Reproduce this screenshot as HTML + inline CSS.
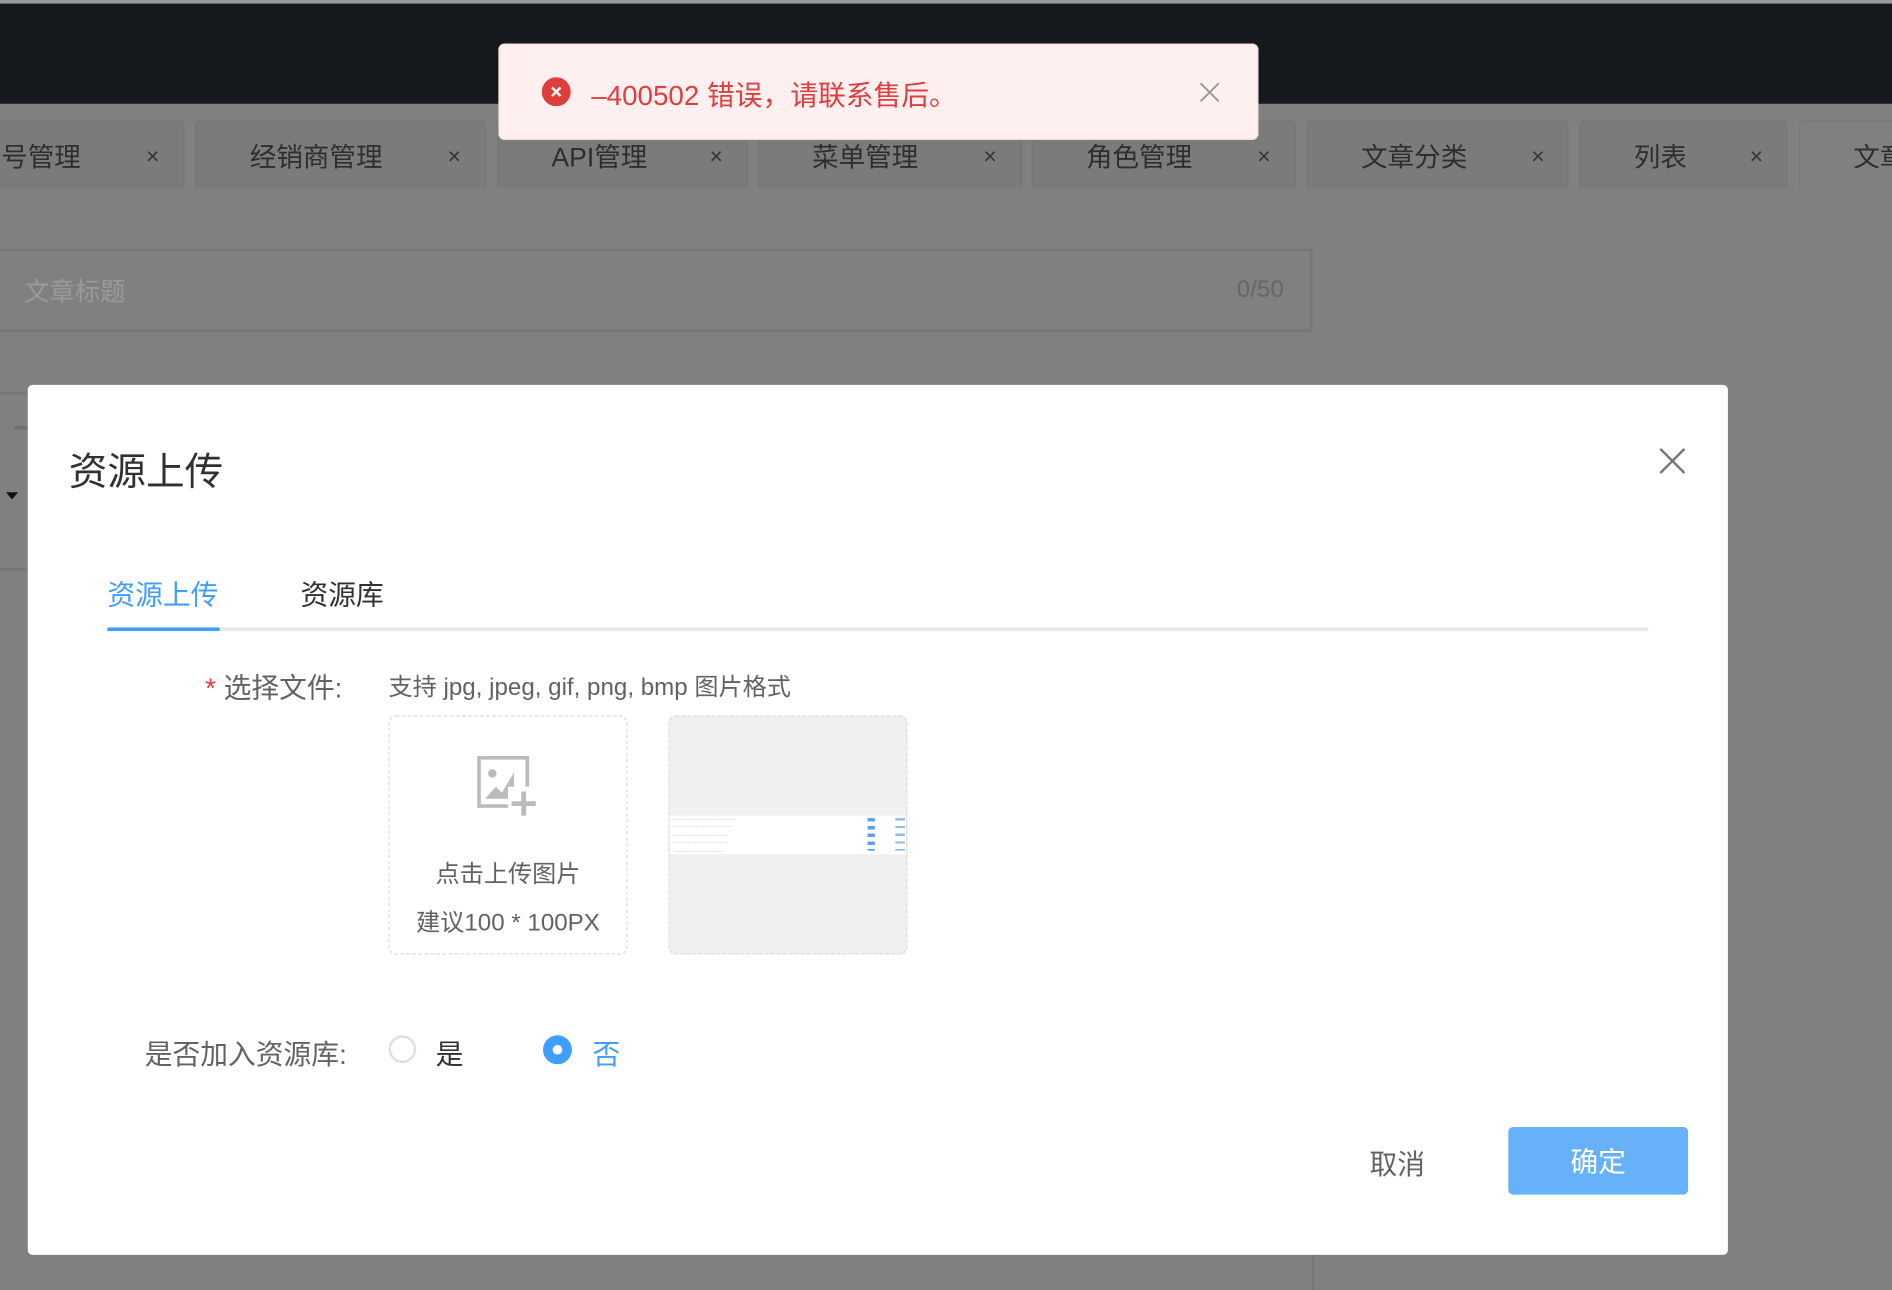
<!DOCTYPE html>
<html><head><meta charset="utf-8">
<style>
*{margin:0;padding:0;box-sizing:border-box}
html,body{width:1892px;height:1290px;overflow:hidden;background:#808080}
#w{position:absolute;left:0;top:0;width:1568px;height:1069px;transform:scale(1.20663);transform-origin:0 0;background:#808080;font-family:"Liberation Sans","Noto Sans CJK SC",sans-serif;overflow:hidden}
.a{position:absolute;white-space:nowrap}
.tab{position:absolute;top:100px;height:56px;background:#7b7b7b;border:1px solid #747474;border-bottom:none;border-radius:4px 4px 0 0;font-size:22px;color:#2e2e2e;line-height:60px}
.tab .x{position:absolute;font-size:19px;color:#333;top:0}
</style></head><body><div id="w">
<div class="a" style="left:0;top:0;width:1568px;height:3px;background:#9a9a9a"></div>
<div class="a" style="left:0;top:3px;width:1568px;height:83px;background:#15181d"></div>

<div class="tab" style="left:-10px;width:163px"><span class="a" style="left:10px">号管理</span><span class="x" style="left:130px">×</span></div>
<div class="tab" style="left:162px;width:241px"><span class="a" style="left:44px">经销商管理</span><span class="x" style="left:208px">×</span></div>
<div class="tab" style="left:412px;width:208px"><span class="a" style="left:44px">API管理</span><span class="x" style="left:175px">×</span></div>
<div class="tab" style="left:628px;width:219px"><span class="a" style="left:44px">菜单管理</span><span class="x" style="left:186px">×</span></div>
<div class="tab" style="left:855px;width:219px"><span class="a" style="left:44px">角色管理</span><span class="x" style="left:186px">×</span></div>
<div class="tab" style="left:1083px;width:217px"><span class="a" style="left:44px">文章分类</span><span class="x" style="left:185px">×</span></div>
<div class="tab" style="left:1309px;width:172px"><span class="a" style="left:44px">列表</span><span class="x" style="left:140px">×</span></div>
<div class="tab" style="left:1491px;width:100px;background:#808080"><span class="a" style="left:44px">文章</span></div>

<div class="a" style="left:-2px;top:206px;width:1090px;height:69px;border:2px solid #767676"></div>
<div class="a" style="left:20px;top:226px;font-size:21px;color:#9a9a9a">文章标题</div>
<div class="a" style="left:1025px;top:229px;font-size:20px;color:#666">0/50</div>
<div class="a" style="left:-2px;top:325px;width:30px;height:148px;border:2px solid #767676;border-left:none"></div>
<div class="a" style="left:12px;top:353px;width:14px;height:3px;background:#6e6e6e"></div>
<div class="a" style="left:5px;top:408px;width:0;height:0;border-left:5px solid transparent;border-right:5px solid transparent;border-top:6px solid #111"></div>
<div class="a" style="left:1087px;top:1040px;width:2px;height:30px;background:#767676"></div>

<!-- toast -->
<div class="a" style="left:413px;top:36px;width:630px;height:80px;background:#fef0f0;border:1px solid #fbd8d8;border-radius:5px"></div>
<svg class="a" style="left:449px;top:64px" width="24" height="24" viewBox="0 0 24 24"><circle cx="12" cy="12" r="12" fill="#e03d3d"/><path d="M8.5 8.5L15.5 15.5M15.5 8.5L8.5 15.5" stroke="#fff" stroke-width="2"/></svg>
<div class="a" style="left:490px;top:60px;font-size:23px;color:#e03d3d">–400502 错误，请联系售后。</div>
<svg class="a" style="left:994px;top:68px" width="17" height="17" viewBox="0 0 17 17"><path d="M1 1L16 16M16 1L1 16" stroke="#999" stroke-width="1.6"/></svg>

<!-- modal -->
<div class="a" style="left:23px;top:319px;width:1409px;height:721px;background:#fff;border-radius:4px"></div>
<div class="a" style="left:57px;top:366px;font-size:32px;color:#303133">资源上传</div>
<svg class="a" style="left:1375px;top:371px" width="22" height="22" viewBox="0 0 22 22"><path d="M1 1L21 21M21 1L1 21" stroke="#777" stroke-width="2"/></svg>
<div class="a" style="left:89px;top:474px;font-size:23px;color:#409eff">资源上传</div>
<div class="a" style="left:249px;top:474px;font-size:23px;color:#303133">资源库</div>
<div class="a" style="left:89px;top:520px;width:1277px;height:3px;background:#e4e7ed"></div>
<div class="a" style="left:89px;top:520px;width:93px;height:3px;background:#409eff"></div>

<div class="a" style="left:170px;top:551px;font-size:23px;color:#606266"><span style="color:#e03d3d">*</span> 选择文件:</div>
<div class="a" style="left:322px;top:553px;font-size:20px;color:#606266">支持 jpg, jpeg, gif, png, bmp 图片格式</div>
<div class="a" style="left:322px;top:593px;width:198px;height:198px;border:1px dashed #d9d9d9;border-radius:6px"></div>
<svg class="a" style="left:395px;top:626px" width="52" height="52" viewBox="0 0 52 52"><rect x="2" y="2" width="40" height="40" fill="none" stroke="#bbb" stroke-width="3"/><circle cx="13" cy="15" r="3.5" fill="#bbb"/><path d="M7 36L16 26L21 31L31 14L31 36Z" fill="#bbb"/><rect x="26" y="26" width="26" height="26" fill="#fff"/><path d="M39 30V50M29 40H49" stroke="#bbb" stroke-width="4"/></svg>
<div class="a" style="left:322px;top:708px;width:198px;text-align:center;font-size:20px;color:#606266">点击上传图片</div>
<div class="a" style="left:322px;top:748px;width:198px;text-align:center;font-size:20px;color:#606266">建议100 * 100PX</div>

<div class="a" style="left:554px;top:593px;width:198px;height:198px;border:1px dashed #d9d9d9;border-radius:6px;background:#f0f0f0;overflow:hidden">
 <div style="position:absolute;left:0;top:82px;width:198px;height:32px;background:#fff"></div>
 <div style="position:absolute;left:0;top:82px;width:198px;font-size:3px;line-height:6.4px;color:#999">
  <div>&nbsp;&nbsp;— — — — — — — — — — — — — —</div><div>&nbsp;&nbsp;&nbsp;— — — — — — — — — — — — —</div><div>&nbsp;&nbsp;&nbsp;&nbsp;— — — — — — — — — — — —</div><div>&nbsp;&nbsp;&nbsp;&nbsp;— — — — — — — — — — — —</div><div>&nbsp;&nbsp;&nbsp;&nbsp;&nbsp;— — — — — — — — — — —</div>
 </div>
 <div style="position:absolute;left:164px;top:84px;width:6px;height:27px;background:repeating-linear-gradient(#5aa0e8 0 3px,transparent 3px 6.4px)"></div>
 <div style="position:absolute;left:187px;top:84px;width:8px;height:27px;background:repeating-linear-gradient(#8bbcf0 0 2px,transparent 2px 6.4px)"></div>
</div>

<div class="a" style="left:120px;top:855px;font-size:23px;color:#606266">是否加入资源库:</div>
<div class="a" style="left:322px;top:858px;width:23px;height:23px;border:2px solid #dcdfe6;border-radius:50%"></div>
<div class="a" style="left:361px;top:855px;font-size:23px;color:#303133">是</div>
<div class="a" style="left:450px;top:858px;width:24px;height:24px;background:#409eff;border-radius:50%"></div>
<div class="a" style="left:458px;top:866px;width:8px;height:8px;background:#fff;border-radius:50%"></div>
<div class="a" style="left:491px;top:855px;font-size:23px;color:#409eff">否</div>

<div class="a" style="left:1135px;top:946px;font-size:23px;color:#606266">取消</div>
<div class="a" style="left:1250px;top:934px;width:149px;height:56px;background:#66b1f8;border-radius:4px;color:#fff;font-size:23px;text-align:center;line-height:58px">确定</div>
</div></body></html>
